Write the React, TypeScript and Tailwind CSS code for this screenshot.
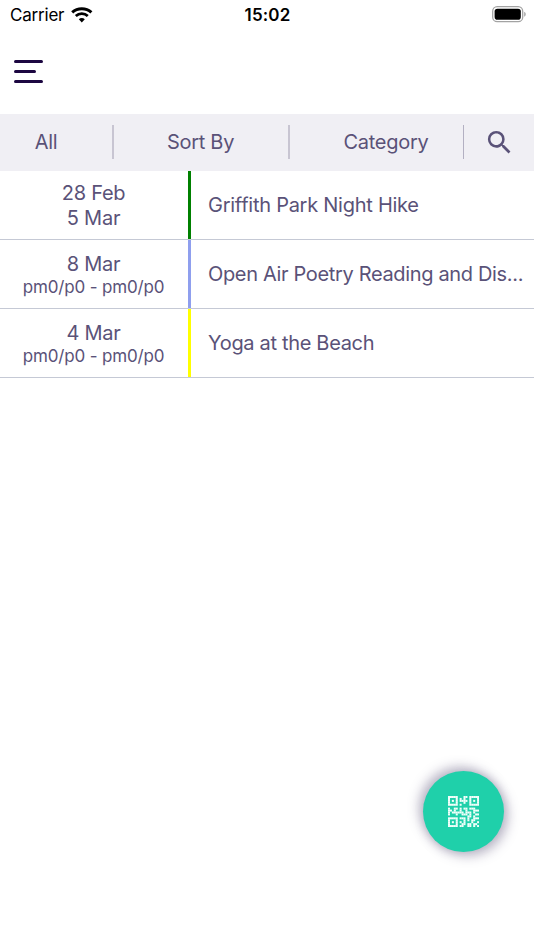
import { MdSearch } from 'react-icons/md';

interface EventItem {
  title: string;
  date: string;
  detail: string;
  titleClass: string;
  dateClass: string;
  detailClass: string;
  barClass: string;
}

const EVENTS: EventItem[] = [
  {
    title: 'Griffith Park Night Hike',
    date: '28 Feb',
    detail: '5 Mar',
    titleClass: 'tracking-[-0.26px]',
    dateClass: 'pt-[2px]',
    detailClass: 'text-[20px] leading-[25px] tracking-[-0.25px]',
    barClass: 'bg-[#008000]',
  },
  {
    title: 'Open Air Poetry Reading and Dis...',
    date: '8 Mar',
    detail: 'pm0/p0 - pm0/p0',
    titleClass: 'tracking-[-0.34px]',
    dateClass: '',
    detailClass: 'text-[17px] leading-[20px] tracking-[-0.17px]',
    barClass: 'bg-[#8f9fee]',
  },
  {
    title: 'Yoga at the Beach',
    date: '4 Mar',
    detail: 'pm0/p0 - pm0/p0',
    titleClass: 'tracking-[-0.32px]',
    dateClass: '',
    detailClass: 'text-[17px] leading-[20px] tracking-[-0.17px]',
    barClass: 'bg-[#ffff00]',
  },
];

// One string per row of modules, "#" is a filled module
const QR_ROWS = [
  '#####...##.#####',
  '#...#.#.#..#...#',
  '#.#.#.####.#.#.#',
  '#...#...#..#...#',
  '#####.#....#####',
  '................',
  '#..##.#.##.###..',
  '##.#..#..#...###',
  '#.######.###.#..',
  '#...#..###.#..##',
  '..........##.#..',
  '#####.###.#..###',
  '#...#...#.#.##..',
  '#.#.#.#.#...#..#',
  '#...#..##.##.##.',
  '#####.##..##.#.#',
];

function StatusBar() {
  return (
    <div className="flex h-[30px] items-center text-black">
      <div className="flex flex-1 items-center pl-[10px]">
        <span className="w-[61px] whitespace-nowrap text-[17px] leading-[30px] tracking-[-0.2px]">Carrier</span>
        <svg className="mb-[1px] h-[16px] w-[22px]" viewBox="0 0 22 16" fill="none" stroke="currentColor">
          <path d="M1.2 5.3C6.6.4 15 .4 20.4 5.3" strokeWidth="3" />
          <path d="M4.8 9C8.2 5.9 13.4 5.9 16.8 9" strokeWidth="2.8" />
          <path d="M7.8 12.2c1.7-1.6 4.3-1.6 6 0l-3 3.2z" fill="currentColor" stroke="none" />
        </svg>
      </div>
      <span className="pr-[1px] text-[17px] font-semibold leading-[30px] tracking-[0.15px]">15:02</span>
      <div className="flex flex-1 justify-end pb-[1px] pr-[8px]">
        <svg className="h-[17px] w-[34px]" viewBox="0 0 34 17">
          <rect x=".7" y=".7" width="30" height="15" rx="4.5" fill="none" stroke="#a3a3a3" strokeWidth="1.3" />
          <rect x="2.6" y="2.7" width="26.2" height="11" rx="2.8" fill="#000" />
          <path d="M32.2 5.7c2 .8 2 4.2 0 5z" fill="#a3a3a3" />
        </svg>
      </div>
    </div>
  );
}

function FilterBar() {
  return (
    <div className="flex h-[57px] items-center bg-[#f0eff4] pb-[1px] text-[20px] tracking-[-0.28px]">
      <button type="button" className="w-[112px] pr-[20px] text-center">All</button>
      <span className="h-[34px] w-[2px] bg-[#c8c5d2]" />
      <button type="button" className="w-[174px] pr-[1px] text-center">Sort By</button>
      <span className="h-[34px] w-[2px] bg-[#c8c5d2]" />
      <button type="button" className="w-[173px] pl-[19px] text-center">Category</button>
      <span className="h-[34px] w-[1px] bg-[#b3b0c2]" />
      <button type="button" aria-label="Search" className="flex flex-1 justify-center pl-[1px]">
        <MdSearch className="h-[31px] w-[31px]" />
      </button>
    </div>
  );
}

function EventRow({ event }: { event: EventItem }) {
  return (
    <li className="flex h-[69px] border-b border-[#c5c9d5]">
      <div className="flex w-[188px] flex-col items-center justify-center whitespace-nowrap pr-[1px]">
        <span className={`text-[20px] leading-[25px] tracking-[-0.25px] ${event.dateClass}`}>{event.date}</span>
        <span className={event.detailClass}>{event.detail}</span>
      </div>
      <span className={`w-[3px] ${event.barClass}`} />
      <p className={`min-w-0 flex-1 whitespace-nowrap pl-[17px] text-[20px] leading-[68px] ${event.titleClass}`}>
        {event.title}
      </p>
    </li>
  );
}

function QrIcon() {
  return (
    <svg className="h-[31px] w-[31px]" viewBox="0 0 16 16" fill="#f2fffb">
      {QR_ROWS.map((row, y) =>
        row.split('').map((cell, x) =>
          cell === '#' ? <rect key={`${x}-${y}`} x={x} y={y} width="1.04" height="1.04" /> : null,
        ),
      )}
    </svg>
  );
}

export default function App() {
  return (
    <div className="flex h-[950px] w-[534px] flex-col overflow-hidden bg-white font-['Inter',sans-serif] text-[#5a5278]">
      <StatusBar />

      {/* Header */}
      <header className="flex h-[84px] items-center pb-[2px] pl-[14px]">
        <button type="button" aria-label="Menu" className="flex flex-col items-start gap-[7px]">
          <span className="h-[3px] w-[29px] rounded-full bg-[#1c0741]" />
          <span className="h-[3px] w-[22px] rounded-full bg-[#1c0741]" />
          <span className="h-[3px] w-[29px] rounded-full bg-[#1c0741]" />
        </button>
      </header>

      <FilterBar />

      {/* Events */}
      <ul className="flex-1">
        {EVENTS.map((event) => (
          <EventRow key={event.title} event={event} />
        ))}
      </ul>

      {/* Scan button */}
      <div className="flex justify-end pb-[98.5px] pr-[30.5px]">
        <button
          type="button"
          aria-label="Scan code"
          className="flex h-[81px] w-[81px] items-center justify-center rounded-full bg-[#1fd0aa] shadow-[-4px_-4px_12px_rgba(90,82,120,0.4),4px_4px_12px_rgba(90,82,120,0.4)]"
        >
          <QrIcon />
        </button>
      </div>
    </div>
  );
}
